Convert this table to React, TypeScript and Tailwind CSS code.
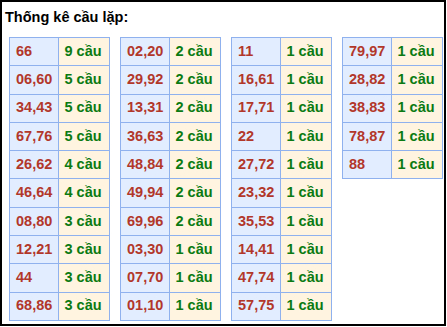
const tables: [string, number][][] = [
  [
    ["66", 9],
    ["06,60", 5],
    ["34,43", 5],
    ["67,76", 5],
    ["26,62", 4],
    ["46,64", 4],
    ["08,80", 3],
    ["12,21", 3],
    ["44", 3],
    ["68,86", 3],
  ],
  [
    ["02,20", 2],
    ["29,92", 2],
    ["13,31", 2],
    ["36,63", 2],
    ["48,84", 2],
    ["49,94", 2],
    ["69,96", 2],
    ["03,30", 1],
    ["07,70", 1],
    ["01,10", 1],
  ],
  [
    ["11", 1],
    ["16,61", 1],
    ["17,71", 1],
    ["22", 1],
    ["27,72", 1],
    ["23,32", 1],
    ["35,53", 1],
    ["14,41", 1],
    ["47,74", 1],
    ["57,75", 1],
  ],
  [
    ["79,97", 1],
    ["28,82", 1],
    ["38,83", 1],
    ["78,87", 1],
    ["88", 1],
  ],
];

function StatTable({ rows }: { rows: [string, number][] }) {
  return (
    <div className="w-[101px] border-l border-t border-[#8fb1ee]">
      {rows.map(([pair, count]) => (
        <div key={pair} className="flex h-[28.3px]">
          <div className="flex w-[49px] items-center border-b border-r border-[#8fb1ee] bg-[#e2eeff] pl-[6px] text-[#b2372b]">
            {pair}
          </div>
          <div className="flex w-[52px] items-center border-b border-r border-[#8fb1ee] bg-[#fff4e0] pl-[6px] text-[#0b7a12]">
            {count} cầu
          </div>
        </div>
      ))}
    </div>
  );
}

export default function App() {
  return (
    <div className="h-[326px] w-[446px] border-2 border-black bg-white pt-[7px] font-['Liberation_Sans',Arial,sans-serif] text-[14.5px] font-bold">
      <h2 className="pl-[3px] leading-[16px] text-black">Thống kê cầu lặp:</h2>
      <div className="mt-[12px] flex items-start gap-[10px] pl-[7px]">
        {tables.map((rows, i) => (
          <StatTable key={i} rows={rows} />
        ))}
      </div>
    </div>
  );
}
